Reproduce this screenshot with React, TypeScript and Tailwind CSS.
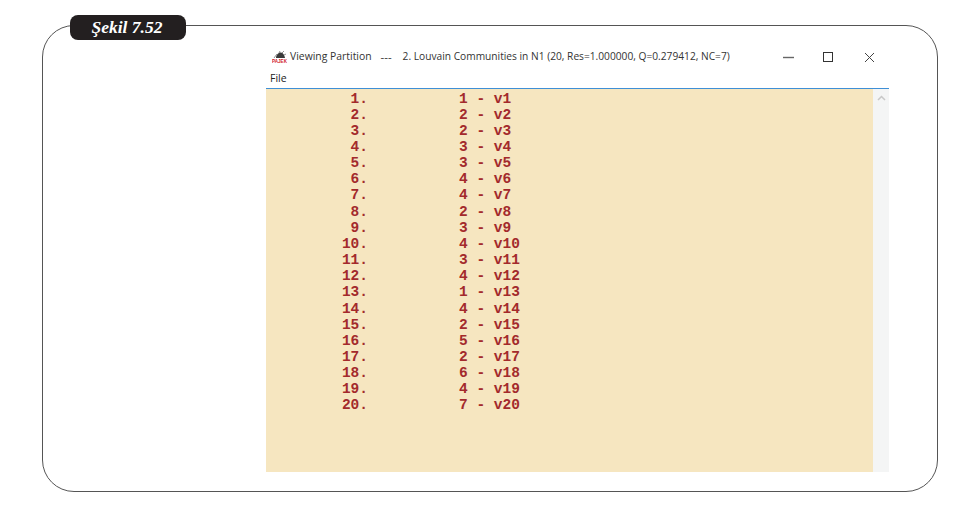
const rows: [number, number][] = [
  [1, 1], [2, 2], [3, 2], [4, 3], [5, 3], [6, 4], [7, 4], [8, 2], [9, 3], [10, 4],
  [11, 3], [12, 4], [13, 1], [14, 4], [15, 2], [16, 5], [17, 2], [18, 6], [19, 4], [20, 7],
];

function PajekIcon() {
  return (
    <svg width="15" height="14" viewBox="0 0 15 14" className="shrink-0">
      <path d="M4 8 C4 5 6 2.5 9 2.5 C11 2.5 12.5 5 13 8 Z" fill="#3a3a3a" />
      <path d="M2 8 L5 4 M7 3 L8 1 M10 3 L12 1 M12 5 L14 4" stroke="#777" strokeWidth="0.8" fill="none" />
      <text x="7.5" y="13" textAnchor="middle" fontSize="4.6" fontWeight="700" fill="#d2232a" fontFamily="Liberation Sans, sans-serif">
        PAJEK
      </text>
    </svg>
  );
}

function WindowButtons() {
  return (
    <div className="flex items-center">
      <svg width="11" height="10" viewBox="0 0 11 10" className="mr-[29px]">
        <path d="M0 5.5 H11" stroke="#666" strokeWidth="1.4" />
      </svg>
      <svg width="10" height="10" viewBox="0 0 10 10" className="mr-[31px]">
        <rect x="0.5" y="0.5" width="9" height="9" fill="none" stroke="#333" strokeWidth="1" />
      </svg>
      <svg width="11" height="11" viewBox="0 0 11 11">
        <path d="M1 1 L10 10 M10 1 L1 10" stroke="#444" strokeWidth="1" />
      </svg>
    </div>
  );
}

export default function App() {
  return (
    <div className="h-[514px] w-[979px] bg-white pl-[42px] pt-[25px] font-['Liberation_Sans',sans-serif]">
      <div className="relative h-[467px] w-[896px] rounded-[32px] border-[1.5px] border-[#555] pl-[223px] pt-[21px]">
        {/* label sits over the top edge of the frame */}
        <div className="absolute left-[27px] top-[-11px] flex h-[25px] w-[116px] items-center justify-center rounded-[8px] bg-[#231f20] pr-[2px] font-['Liberation_Serif',serif] text-[17.5px] font-bold italic text-white">
          Şekil 7.52
        </div>

        <div className="w-[623px]">
          <div className="flex h-[20px] items-center pl-[6px] pr-[14px] font-['Open_Sans',sans-serif] text-[10.4px] text-[#333]">
            <PajekIcon />
            <span className="ml-[3px] whitespace-pre">Viewing Partition</span>
            <span className="ml-[9px] w-[22px] text-[11.5px]">---</span>
            <span className="whitespace-pre text-[10.2px]">2. Louvain Communities in N1 (20, Res=1.000000, Q=0.279412, NC=7)</span>
            <div className="ml-auto">
              <WindowButtons />
            </div>
          </div>
          <div className="flex h-[21.5px] items-center border-b border-[#3f8fd6] pl-[4px] pt-[4px] font-['Open_Sans',sans-serif] text-[10.5px] text-[#222]">
            File
          </div>
          <div className="flex h-[383px]">
            <div className="flex-1 bg-[#f6e6c0] pt-[2px] font-['Liberation_Mono',monospace] text-[14.5px] font-bold leading-[16.16px] text-[#a32a2c]">
              {rows.map(([n, c]) => (
                <div key={n} className="flex whitespace-pre">
                  <span className="w-[102px] text-right">{n}.</span>
                  <span className="ml-[91px]">{c} - v{n}</span>
                </div>
              ))}
            </div>
            <div className="flex w-[16px] justify-center bg-[#f4f5f5] pt-[6px]">
              <svg width="9" height="6" viewBox="0 0 9 6">
                <path d="M1 5 L4.5 1.5 L8 5" stroke="#c8c8c8" strokeWidth="1.5" fill="none" />
              </svg>
            </div>
          </div>
        </div>
      </div>
    </div>
  );
}
